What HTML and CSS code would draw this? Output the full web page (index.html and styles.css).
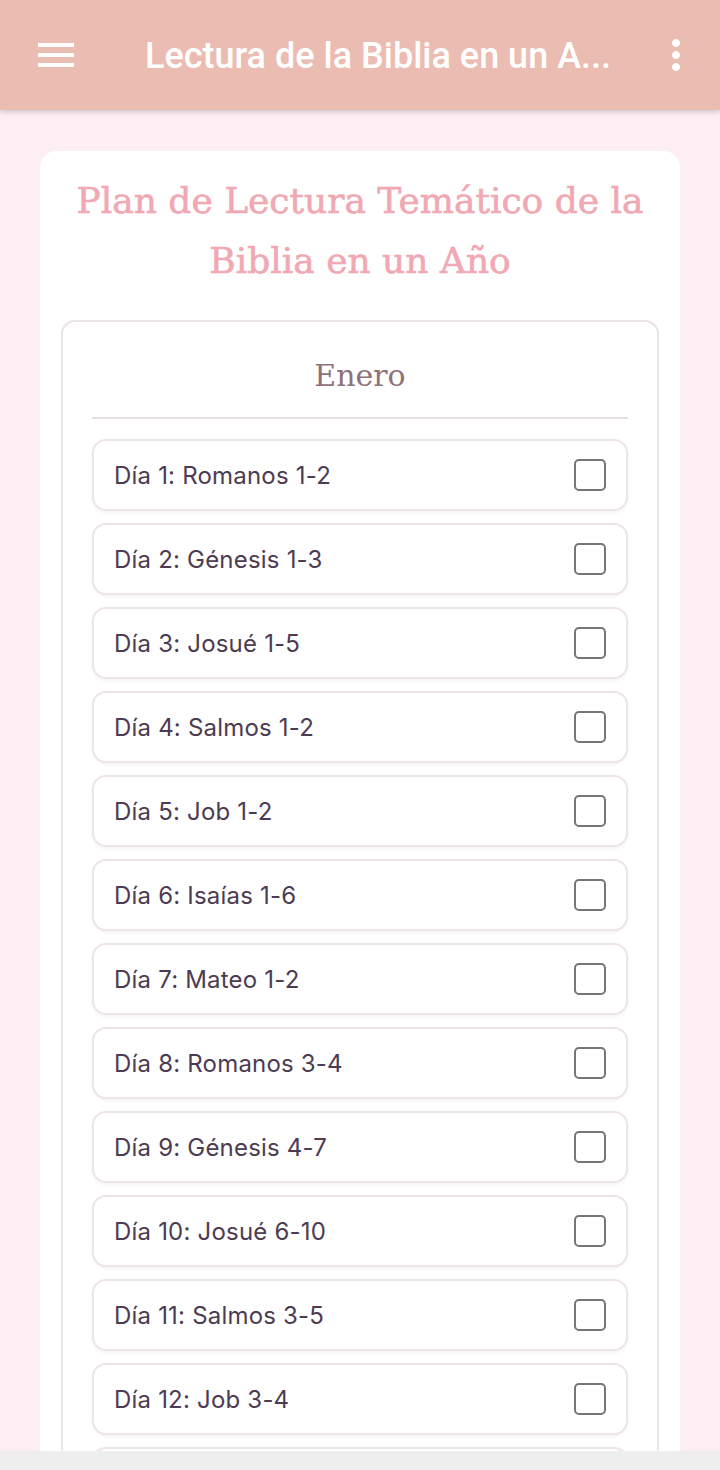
FILE: index.html
```html
<!DOCTYPE html>
<html lang="es">
<head>
<meta charset="utf-8">
<title>Lectura de la Biblia en un Año</title>
<link rel="stylesheet" href="styles.css">
</head>
<body>
<div class="app">
  <header class="appbar">
    <span class="icon menu-icon">
      <svg width="48" height="48" viewBox="0 0 24 24"><path d="M3 18h18v-2H3v2zm0-5h18v-2H3v2zm0-7v2h18V6H3z" fill="#fff"/></svg>
    </span>
    <h1 class="appbar-title">Lectura de la Biblia en un A...</h1>
    <span class="icon more-icon">
      <svg width="48" height="48" viewBox="0 0 24 24"><path d="M12 8c1.1 0 2-.9 2-2s-.9-2-2-2-2 .9-2 2 .9 2 2 2zm0 2c-1.1 0-2 .9-2 2s.9 2 2 2 2-.9 2-2-.9-2-2-2zm0 6c-1.1 0-2 .9-2 2s.9 2 2 2 2-.9 2-2-.9-2-2-2z" fill="#fff"/></svg>
    </span>
  </header>
  <main class="content">
    <section class="card">
      <h2 class="plan-title">Plan de Lectura Temático de la Biblia en un Año</h2>
      <div class="month">
        <h3 class="month-name">Enero</h3>
        <hr class="divider">
        <ul class="days">
          <li class="day"><span class="day-text">Día 1: Romanos 1-2</span><span class="check"></span></li>
          <li class="day"><span class="day-text">Día 2: Génesis 1-3</span><span class="check"></span></li>
          <li class="day"><span class="day-text">Día 3: Josué 1-5</span><span class="check"></span></li>
          <li class="day"><span class="day-text">Día 4: Salmos 1-2</span><span class="check"></span></li>
          <li class="day"><span class="day-text">Día 5: Job 1-2</span><span class="check"></span></li>
          <li class="day"><span class="day-text">Día 6: Isaías 1-6</span><span class="check"></span></li>
          <li class="day"><span class="day-text">Día 7: Mateo 1-2</span><span class="check"></span></li>
          <li class="day"><span class="day-text">Día 8: Romanos 3-4</span><span class="check"></span></li>
          <li class="day"><span class="day-text">Día 9: Génesis 4-7</span><span class="check"></span></li>
          <li class="day"><span class="day-text">Día 10: Josué 6-10</span><span class="check"></span></li>
          <li class="day"><span class="day-text">Día 11: Salmos 3-5</span><span class="check"></span></li>
          <li class="day"><span class="day-text">Día 12: Job 3-4</span><span class="check"></span></li>
          <li class="day"><span class="day-text">Día 13: Isaías 7-12</span><span class="check"></span></li>
        </ul>
      </div>
    </section>
  </main>
  <div class="bottom-bar"></div>
</div>
</body>
</html>
```

FILE: styles.css
```css
* { box-sizing: border-box; }
html, body { margin: 0; padding: 0; }
body {
  width: 720px;
  height: 1470px;
  overflow: hidden;
  background: #eeeeee;
  font-family: "Inter", "Noto Sans", sans-serif;
}
.app {
  display: flex;
  flex-direction: column;
  height: 1470px;
}
.appbar {
  position: relative;
  z-index: 2;
  flex: 0 0 110px;
  height: 110px;
  background: #ebbcb1;
  display: flex;
  align-items: center;
  padding: 0 20px 0 32px;
  box-shadow: 0 2px 5px rgba(0,0,0,0.18);
}
.icon { display: flex; width: 48px; height: 48px; }
.appbar-title {
  flex: 1;
  margin: 2px 0 0 65px;
  font-family: "Roboto", "Liberation Sans", sans-serif;
  font-weight: 500;
  font-size: 36px;
  line-height: 48px;
  color: #ffffff;
  white-space: nowrap;
}
.content {
  flex: 1;
  overflow: hidden;
  background: #fdeef3;
  padding: 41px 40px 0;
}
.card {
  background: #ffffff;
  border-radius: 16px;
  padding: 20px 21px 0;
}
.plan-title {
  margin: 0;
  text-align: center;
  font-family: "DejaVu Serif", "Liberation Serif", serif;
  font-weight: normal;
  font-size: 36px;
  line-height: 60px;
  color: #f0a8b2;
  -webkit-text-stroke: 0.6px #f0a8b2;
}
.month {
  margin-top: 29px;
  border: 2px solid #ebe3e6;
  border-radius: 14px;
  padding: 34px 29px 0;
}
.month-name {
  margin: 0;
  text-align: center;
  font-family: "DejaVu Serif", "Liberation Serif", serif;
  font-weight: normal;
  font-size: 30px;
  line-height: 40px;
  color: #8e727b;
}
.divider {
  margin: 21px 0 0;
  border: 0;
  border-top: 2px solid #e6dfe2;
  height: 0;
}
.days {
  list-style: none;
  margin: 20px 0 0;
  padding: 0;
  display: flex;
  flex-direction: column;
  gap: 12px;
}
.day {
  height: 72px;
  border: 2px solid #eee5e8;
  border-radius: 14px;
  background: #fff;
  box-shadow: 0 2px 3px rgba(120, 80, 90, 0.06);
  display: flex;
  align-items: center;
  justify-content: space-between;
  padding: 0 20px 0 20px;
}
.day-text {
  font-family: "Inter", "Noto Sans", sans-serif;
  font-size: 24px;
  letter-spacing: 0.2px;
  color: #4d3b51;
}
.check {
  width: 32px;
  height: 32px;
  border: 2px solid #767676;
  border-radius: 5px;
}
.bottom-bar {
  flex: 0 0 19px;
  background: #eeeeee;
}
```
